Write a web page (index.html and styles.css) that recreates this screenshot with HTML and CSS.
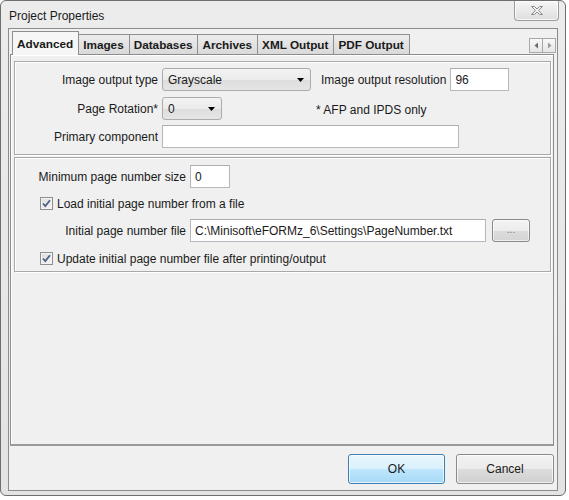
FILE: index.html
```html
<!DOCTYPE html>
<html>
<head>
<meta charset="utf-8">
<title>Project Properties</title>
<link rel="stylesheet" href="styles.css">
</head>
<body>
<div class="window">
  <div class="titlebar">
    <span class="title">Project Properties</span>
    <div class="close" aria-label="Close">
      <svg width="14" height="11" viewBox="0 0 14 11"><path d="M1.5 1.5h3l2.5 2.5 2.5-2.5h3l-4 4 4 4h-3l-2.5-2.5-2.5 2.5h-3l4-4z" fill="#f2f2f2" stroke="#8a8a8a" stroke-width="1" stroke-linejoin="round"/></svg>
    </div>
  </div>
  <div class="client">
    <div class="tabrow">
      <div class="tab active">Advanced</div>
      <div class="tab">Images</div>
      <div class="tab">Databases</div>
      <div class="tab">Archives</div>
      <div class="tab">XML Output</div>
      <div class="tab">PDF Output</div>
      <div class="scroller">
        <span class="sbtn"><svg width="5" height="7" viewBox="0 0 5 7"><path d="M4 0.5v6L0.5 3.5z" fill="#6a6a6a"/></svg></span>
        <span class="sbtn"><svg width="5" height="7" viewBox="0 0 5 7"><path d="M1 0.5v6L4.5 3.5z" fill="#9a9a9a"/></svg></span>
      </div>
    </div>
    <div class="panel">
      <div class="group g1">
        <div class="row">
          <span class="lbl lbl-a">Image output type</span>
          <div class="combo combo-wide"><span>Grayscale</span><svg class="arrow" width="7" height="4" viewBox="0 0 7 4"><path d="M0 0h7L3.5 4z" fill="#000"/></svg></div>
          <span class="lbl-res">Image output resolution</span>
          <div class="field field-res">96</div>
        </div>
        <div class="row row2">
          <span class="lbl lbl-a">Page Rotation*</span>
          <div class="combo combo-small"><span>0</span><svg class="arrow" width="7" height="4" viewBox="0 0 7 4"><path d="M0 0h7L3.5 4z" fill="#000"/></svg></div>
          <span class="note">* AFP and IPDS only</span>
        </div>
        <div class="row row3">
          <span class="lbl lbl-a">Primary component</span>
          <div class="field field-primary"></div>
        </div>
      </div>
      <div class="group g2">
        <div class="row">
          <span class="lbl lbl-b">Minimum page number size</span>
          <div class="field field-min">0</div>
        </div>
        <div class="chkrow chk1">
          <span class="chk"><svg width="11" height="11" viewBox="0 0 11 11"><path d="M2 5.5l2.3 2.6L9 2.2" fill="none" stroke="#4d6185" stroke-width="1.8"/></svg></span>
          <span>Load initial page number from a file</span>
        </div>
        <div class="row row-file">
          <span class="lbl lbl-b">Initial page number file</span>
          <div class="field field-file">C:\Minisoft\eFORMz_6\Settings\PageNumber.txt</div>
          <div class="dots">...</div>
        </div>
        <div class="chkrow chk2">
          <span class="chk"><svg width="11" height="11" viewBox="0 0 11 11"><path d="M2 5.5l2.3 2.6L9 2.2" fill="none" stroke="#4d6185" stroke-width="1.8"/></svg></span>
          <span>Update initial page number file after printing/output</span>
        </div>
      </div>
    </div>
    <div class="buttons">
      <div class="btn btn-ok">OK</div>
      <div class="btn btn-cancel">Cancel</div>
    </div>
  </div>
</div>
</body>
</html>
```

FILE: styles.css
```css
html, body {
  margin: 0;
  background: #ffffff;
}

body {
  font-family: "Liberation Sans", Arial, sans-serif;
  font-size: 12px;
  color: #1a1a1a;
}

.window {
  box-sizing: border-box;
  width: 566px;
  height: 496px;
  border: 1px solid #6e6e6e;
  border-radius: 6px;
  background: linear-gradient(#ececec, #e3e3e3);
  padding: 0 7px 4px 7px;
  display: flex;
  flex-direction: column;
}

.titlebar {
  flex: none;
  height: 27px;
  margin: 0 -7px;
  padding-left: 8px;
  display: flex;
  align-items: flex-start;
}

.title {
  margin-top: 8px;
  color: #1a1a1a;
}

.close {
  box-sizing: border-box;
  margin-left: auto;
  margin-right: 6px;
  width: 45px;
  height: 20px;
  border: 1px solid #9c9c9c;
  border-top: none;
  border-radius: 0 0 4px 4px;
  background: linear-gradient(#f6f6f6, #dedede);
  box-shadow: inset 0 0 0 1px rgba(255,255,255,0.7);
  display: flex;
  align-items: center;
  justify-content: center;
}

.client {
  flex: 1;
  border: 1px solid #8c8c8c;
  background: #f0f0f0;
  display: flex;
  flex-direction: column;
  padding: 0 3px 0 1px;
}

.tabrow {
  flex: none;
  height: 25px;
  padding-left: 2px;
  display: flex;
  align-items: flex-end;
}

.tab {
  box-sizing: border-box;
  height: 20px;
  padding: 0 5px 0 4px;
  margin-left: -1px;
  border: 1px solid #8e8e8e;
  border-bottom: none;
  background: linear-gradient(#ececec, #d9d9d9);
  font-weight: bold;
  font-size: 11.75px;
  color: #1a1a1a;
  display: flex;
  align-items: center;
}

.tab.active {
  height: 24px;
  margin-left: 0;
  margin-bottom: -1px;
  padding: 0 5px 1px 4px;
  background: #f6f6f6;
  position: relative;
  z-index: 1;
}

.scroller {
  margin-left: auto;
  margin-right: -2px;
  margin-bottom: 1px;
  display: flex;
}

.sbtn {
  box-sizing: border-box;
  width: 14px;
  height: 15px;
  border: 1px solid #a8a8a8;
  margin-left: -1px;
  background: linear-gradient(#f8f8f8, #e6e6e6);
  display: flex;
  align-items: center;
  justify-content: center;
}

.panel {
  box-sizing: border-box;
  flex: none;
  height: 392px;
  margin-left: 0;
  border: 1px solid #8c8c8c;
  border-bottom: 2px solid #9a9a9a;
  box-shadow: inset 1px 1px 0 #ffffff;
  padding: 6px 2px 0 3px;
}

.group {
  box-sizing: border-box;
  border: 1px solid #a9a9a9;
  box-shadow: inset 1px 1px 0 #ffffff, 1px 1px 0 #ffffff;
}

.g1 {
  height: 94px;
  padding-top: 6px;
}

.g2 {
  height: 115px;
  margin-top: 2px;
  padding-top: 7px;
}

.row {
  height: 23px;
  display: flex;
  align-items: center;
}

.row2 {
  margin-top: 6px;
}

.row3 {
  margin-top: 5px;
}

.lbl {
  flex: none;
  text-align: right;
  margin-right: 4px;
}

.lbl-a {
  width: 143px;
}

.lbl-b {
  width: 171px;
}

.lbl-res {
  margin-left: 10px;
  margin-right: 4px;
}

.note {
  margin-left: 94px;
  margin-top: 2px;
}

.combo {
  box-sizing: border-box;
  height: 23px;
  border: 1px solid #acacac;
  border-radius: 3px;
  background: linear-gradient(#f3f3f3 0%, #ebebeb 50%, #dddddd 51%, #e5e5e5 100%);
  display: flex;
  align-items: center;
  padding: 0 6px 0 5px;
}

.combo span {
  flex: 1;
}

.combo-wide {
  width: 149px;
}

.combo-small {
  width: 60px;
}

.field {
  box-sizing: border-box;
  height: 23px;
  border: 1px solid #b5b8be;
  border-top-color: #abadb3;
  background: #ffffff;
  padding: 0 4px;
  display: flex;
  align-items: center;
  white-space: nowrap;
  overflow: hidden;
}

.field-res {
  width: 59px;
}

.field-primary {
  width: 297px;
}

.field-min {
  width: 40px;
}

.field-file {
  width: 296px;
}

.dots {
  box-sizing: border-box;
  width: 38px;
  height: 23px;
  margin-left: 6px;
  border: 1px solid #8a8a8a;
  border-radius: 3px;
  background: linear-gradient(#f4f4f4 0%, #ececec 50%, #dcdcdc 51%, #d4d4d4 100%);
  box-shadow: inset 0 0 0 1px rgba(255,255,255,0.6);
  color: #777;
  font-size: 10px;
  display: flex;
  align-items: center;
  justify-content: center;
  padding-bottom: 2px;
}

.chkrow {
  height: 13px;
  display: flex;
  align-items: center;
}

.chk1 {
  margin-top: 9px;
}

.row-file {
  margin-top: 9px;
}

.chk2 {
  margin-top: 10px;
}

.chk {
  box-sizing: border-box;
  flex: none;
  width: 13px;
  height: 13px;
  margin-left: 25px;
  margin-right: 4px;
  border: 1px solid #8e8f8f;
  background: linear-gradient(135deg, #dcdcdc, #f6f6f6);
  box-shadow: inset 0 0 0 1px #f4f4f4;
  display: flex;
  align-items: center;
  justify-content: center;
}

.buttons {
  flex: 1;
  display: flex;
  justify-content: flex-end;
  align-items: flex-start;
  padding-top: 8px;
  gap: 11px;
}

.btn {
  box-sizing: border-box;
  height: 30px;
  border-radius: 3px;
  display: flex;
  align-items: center;
  justify-content: center;
  font-size: 12px;
  color: #1a1a1a;
}

.btn-ok {
  width: 97px;
  border: 1px solid #3c7fb1;
  background: linear-gradient(#eaf6fd 0%, #d9f0fc 50%, #bee6fd 51%, #a7d9f5 100%);
  box-shadow: inset 0 0 0 1px rgba(255,255,255,0.7);
}

.btn-cancel {
  width: 98px;
  border: 1px solid #8a8a8a;
  background: linear-gradient(#f2f2f2 0%, #ebebeb 50%, #dddddd 51%, #cfcfcf 100%);
  box-shadow: inset 0 0 0 1px rgba(255,255,255,0.7);
}
```
